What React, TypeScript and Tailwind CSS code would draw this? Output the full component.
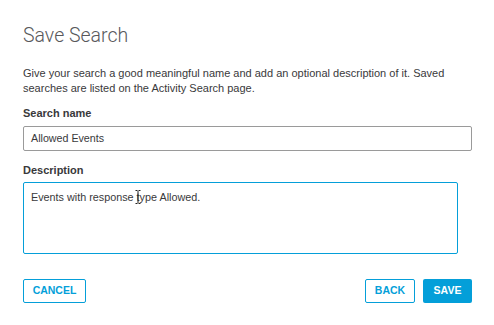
export default function App() {
  return (
    <div className="h-[325px] w-[494px] bg-white font-['Liberation_Sans',Arial,sans-serif] text-[#39393b]">
      <div className="flex flex-col pl-[23px] pr-[22px] pt-[24px]">
        <h1 className="font-['Roboto',sans-serif] text-[19.5px] font-light leading-[24px] text-[#58585b]">
          Save Search
        </h1>

        <p className="mt-[18px] text-[11px] leading-[15px]">
          Give your search a good meaningful name and add an optional description of it. Saved
          searches are listed on the Activity Search page.
        </p>

        <label className="mt-[10px] text-[11px] font-bold leading-[14px]">Search name</label>
        <div className="mt-[6px] flex h-[25px] items-center rounded-[2px] border border-[#9a9a9a] px-[7px] text-[10.7px]">
          Allowed Events
        </div>

        <label className="mt-[12px] text-[11px] font-bold leading-[14px]">Description</label>
        <div className="relative mt-[5px] mr-[14px] h-[72px] rounded-[2px] border border-[#049fd9] px-[7px] pt-[6px] text-[10.8px]">
          Events with response type Allowed.
          <svg className="absolute left-[111px] top-[7px]" width="6" height="14" viewBox="0 0 6 14">
            <path d="M0.5 0.5h2M3.5 0.5h2M3 1v12M0.5 13.5h2M3.5 13.5h2" stroke="#222" strokeWidth="1" fill="none" />
          </svg>
        </div>

        <div className="mt-[25px] flex items-center">
          <button className="h-[24px] w-[63px] rounded-[2px] border border-[#049fd9] text-[10.5px] font-bold text-[#049fd9]">
            CANCEL
          </button>
          <div className="ml-auto flex gap-[8px]">
            <button className="h-[24px] w-[50px] rounded-[2px] border border-[#049fd9] text-[10.5px] font-bold text-[#049fd9]">
              BACK
            </button>
            <button className="h-[24px] w-[49px] rounded-[2px] bg-[#049fd9] text-[10.5px] font-bold text-white">
              SAVE
            </button>
          </div>
        </div>
      </div>
    </div>
  )
}
